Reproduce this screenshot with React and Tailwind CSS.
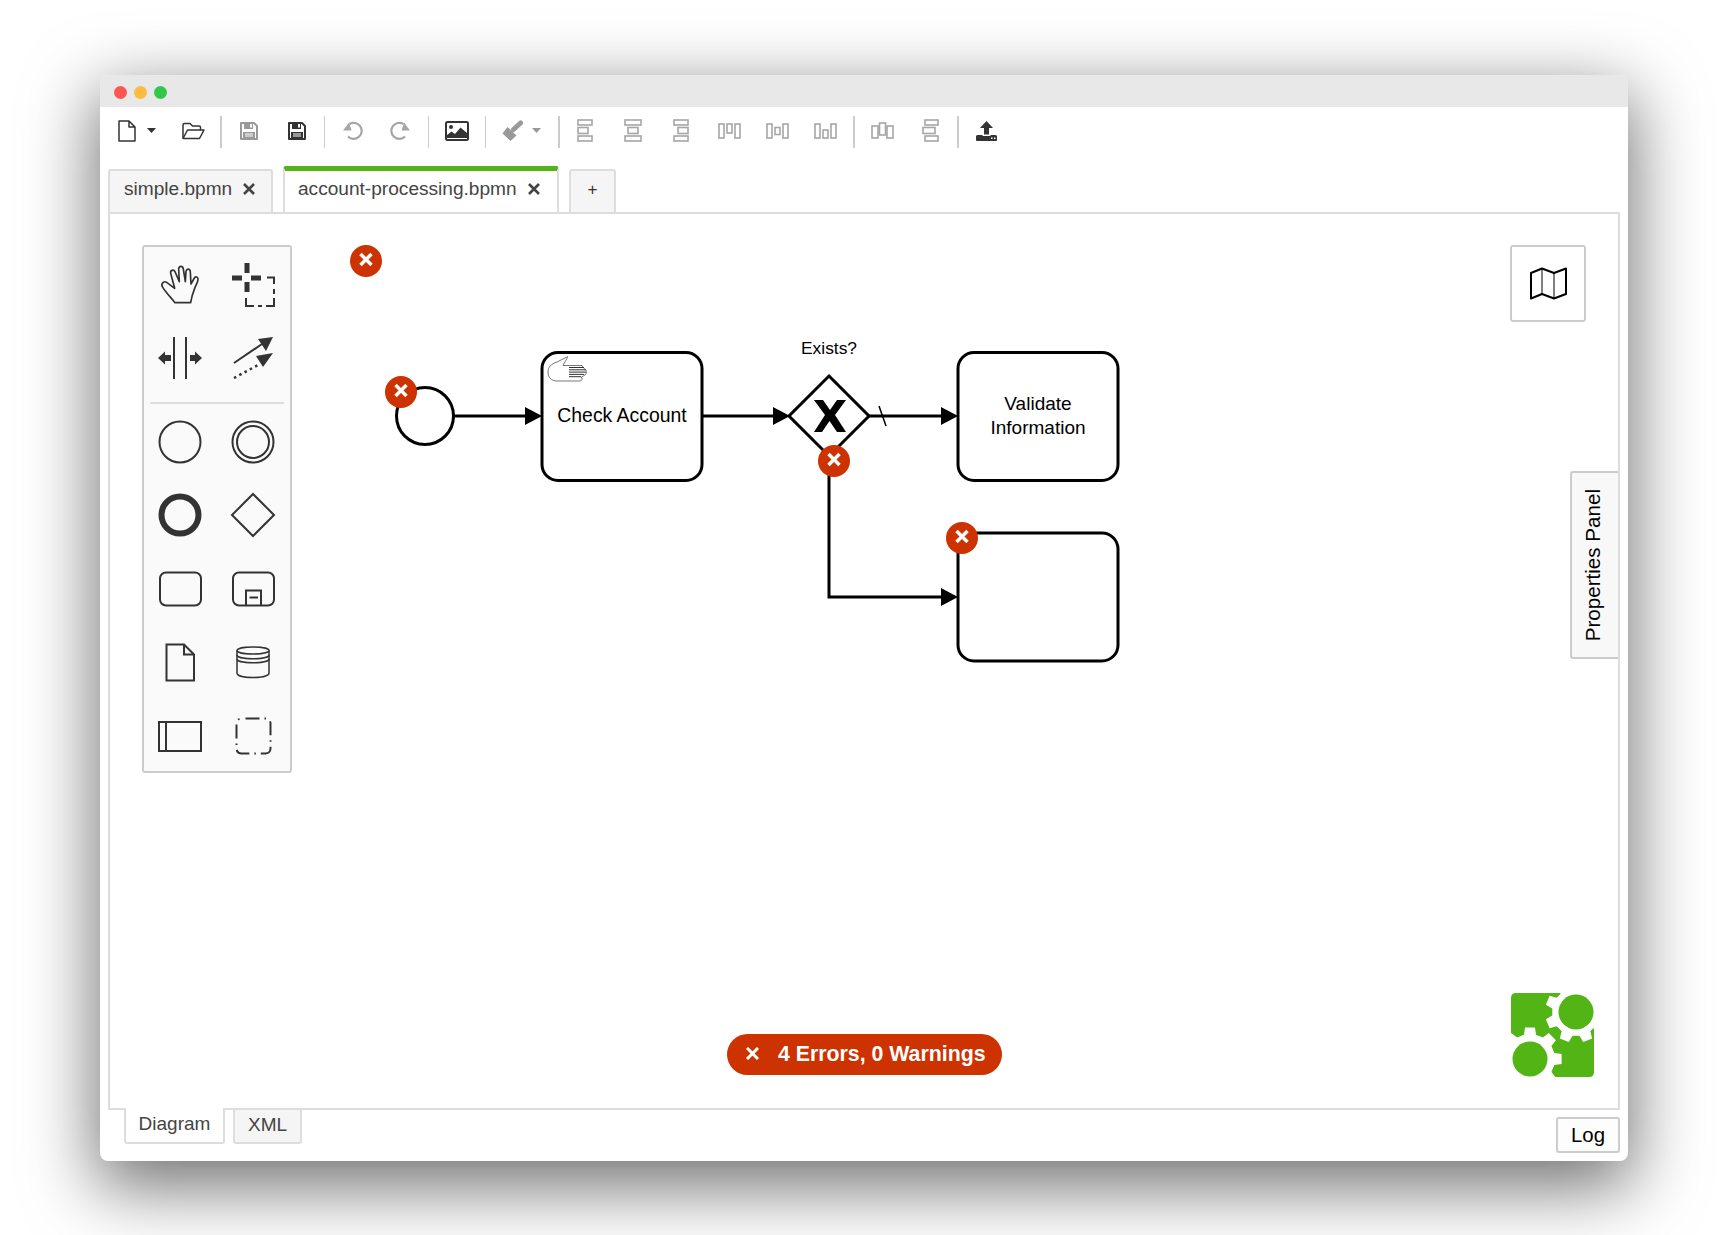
import React from 'react';

const gear = (cx, cy, tip, root, offset) => {
  const pts = [];
  for (let k = 0; k < 8; k++) {
    const a = offset + k * 45;
    [[-14, root], [-9, tip], [9, tip], [14, root]].forEach(([d, r]) => {
      const t = ((a + d) * Math.PI) / 180;
      pts.push(`${(cx + r * Math.cos(t)).toFixed(1)},${(cy + r * Math.sin(t)).toFixed(1)}`);
    });
  }
  return pts.join(' ');
};

const Sep = ({ className = '' }) => <div className={`w-[2px] h-[32px] bg-[#ccc] shrink-0 ${className}`} />;

const Caret = ({ color }) => (
  <svg viewBox="0 0 9 5" className="w-[9px] h-[5px]">
    <polygon points="0,0 9,0 4.5,5" fill={color} />
  </svg>
);

const SaveIcon = ({ color }) => (
  <svg viewBox="0 0 18 18" className="w-[18px] h-[18px]">
    <path d="M1 1H14L17 4V17H1Z" fill="#fff" stroke={color} strokeWidth="2" strokeLinejoin="round" />
    <path d="M4 1H13V7H4Z" fill={color} />
    <rect x="10" y="2" width="2" height="3.500" fill="#fff" />
    <path d="M3 10H15V17H3Z" fill={color} />
    <path d="M5 12H13M5 14H13" stroke="#fff" strokeWidth="1" />
  </svg>
);

const UndoIcon = ({ className = '' }) => (
  <svg viewBox="0 0 20 19" className={`w-[20px] h-[19px] ${className}`}>
    <path d="M6.500 3A8 8 0 1 1 5 15.500" fill="none" stroke="#a6a6a6" strokeWidth="2.200" />
    <polygon points="0,9.500 8.500,9.500 6,1.500" fill="#a6a6a6" />
  </svg>
);

const Aligned = ({ w, h, rects }) => (
  <svg viewBox={`-1 -1 ${w + 2} ${h + 2}`} style={{ width: w + 2, height: h + 2 }}>
    {rects.map((r, i) => (
      <rect key={i} x={r[0]} y={r[1]} width={r[2]} height={r[3]} fill="none" stroke="#a6a6a6" strokeWidth="1.600" />
    ))}
  </svg>
);

const Btn = ({ className = 'w-[48px]', children }) => (
  <div className={`flex items-center justify-center shrink-0 h-full pb-[3px] ${className}`}>{children}</div>
);

const Toolbar = () => (
  <div className="flex items-center h-[50px] shrink-0">
    <div className="flex items-center w-[70px] h-full pl-[18px] pb-[3px] shrink-0">
      <svg viewBox="0 0 18 22" className="w-[18px] h-[22px]">
        <path d="M1 1H11L17 7V21H1Z M11 1V7H17" fill="none" stroke="#333" strokeWidth="1.500" strokeLinejoin="round" />
      </svg>
      <div className="ml-[11px] flex">
        <Caret color="#333" />
      </div>
    </div>
    <Btn className="w-[47px]">
      <svg viewBox="0 0 23 18" className="w-[23px] h-[18px]">
        <path d="M1 16V3Q1 1.500 2.500 1.500H8L10.500 4H17Q18.500 4 18.500 5.500V8" fill="none" stroke="#333" strokeWidth="1.500" />
        <path d="M1 16.500L5.500 8H22L17.500 16.500Z" fill="none" stroke="#333" strokeWidth="1.500" strokeLinejoin="round" />
      </svg>
    </Btn>
    <Sep className="ml-[3px]" />
    <Btn className="w-[54px]"><SaveIcon color="#999" /></Btn>
    <Btn className="w-[42px]"><SaveIcon color="#333" /></Btn>
    <Sep className="ml-[6px] !w-[1px]" />
    <Btn className="w-[56px]"><UndoIcon /></Btn>
    <Btn className="w-[38px]"><UndoIcon className="-scale-x-100" /></Btn>
    <Sep className="ml-[9px] !w-[1px]" />
    <Btn className="w-[56px]">
      <svg viewBox="0 0 24 20" className="w-[24px] h-[20px]">
        <rect x="1" y="1" width="22" height="18" rx="1.500" fill="#fff" stroke="#333" strokeWidth="2" />
        <circle cx="6" cy="6" r="2" fill="#333" />
        <polygon points="2,17 2,14 6.500,10.500 10,13 15.500,6.500 22,12 22,17" fill="#333" />
      </svg>
    </Btn>
    <Sep className="!w-[1px]" />
    <div className="flex items-center w-[72px] h-full pl-[16px] pb-[3px] shrink-0">
      <svg viewBox="0 0 20 21" className="w-[21px] h-[21px]">
        <path d="M18 3L11 9.500" stroke="#999" strokeWidth="5" strokeLinecap="round" />
        <polygon points="5,7 14,15.500 8,21 0,13.500" fill="#999" />
      </svg>
      <div className="ml-[9px] flex">
        <Caret color="#999" />
      </div>
    </div>
    <Sep />
    <Btn className="w-[48px] ml-[1px]"><Aligned w={14} h={21} rects={[[0, 0, 14, 5], [0, 7.500, 10, 6], [0, 16, 14, 5]]} /></Btn>
    <Btn><Aligned w={16} h={21} rects={[[0, 0, 16, 5], [3, 7.500, 10, 6], [0, 16, 16, 5]]} /></Btn>
    <Btn><Aligned w={14} h={21} rects={[[0, 0, 14, 5], [4, 7.500, 10, 6], [0, 16, 14, 5]]} /></Btn>
    <Btn><Aligned w={21} h={14} rects={[[0, 0, 5, 14], [8, 0, 5, 9], [16, 0, 5, 14]]} /></Btn>
    <Btn><Aligned w={21} h={14} rects={[[0, 0, 5, 14], [8, 3.500, 5, 7], [16, 0, 5, 14]]} /></Btn>
    <Btn><Aligned w={21} h={14} rects={[[0, 0, 5, 14], [8, 6, 5, 8], [16, 0, 5, 14]]} /></Btn>
    <Sep className="ml-[4px]" />
    <Btn className="w-[48px] ml-[3px]"><Aligned w={21} h={15} rects={[[0, 3, 6, 12], [7.500, 0, 6, 12], [15, 3, 6, 12]]} /></Btn>
    <Btn><Aligned w={15} h={21} rects={[[2, 0, 13, 5], [0, 7.500, 12, 6], [2, 16, 13, 5]]} /></Btn>
    <Sep className="ml-[3px]" />
    <Btn className="w-[55px]">
      <svg viewBox="0 0 21 20" className="w-[21px] h-[20px]">
        <polygon points="10.500,0 17,7 13,7 13,13.500 8,13.500 8,7 4,7" fill="#333" />
        <path d="M0 19V15.500Q0 14 1.500 14H6.500V15H14.500V14H19.500Q21 14 21 15.500V19Q21 20 20 20H1Q0 20 0 19Z" fill="#333" />
        <rect x="15" y="16.500" width="1.500" height="1.500" fill="#fff" />
        <rect x="18" y="16.500" width="1.500" height="1.500" fill="#fff" />
      </svg>
    </Btn>
  </div>
);

const CloseX = () => (
  <svg viewBox="0 0 12 12" className="w-[12px] h-[12px]">
    <path d="M1 1L11 11M11 1L1 11" stroke="#444" strokeWidth="2.600" />
  </svg>
);

const TabStrip = () => (
  <div className="flex items-end h-[47px] pl-[8px] shrink-0">
    <div className="flex items-center w-[165px] h-[44px] pl-[14px] pb-[6px] bg-[#f5f5f5] border-2 border-b-0 border-[#ddd] rounded-t-[3px]">
      <span className="text-[19.1px] text-[#444] leading-none">simple.bpmn</span>
      <span className="ml-[11px] flex"><CloseX /></span>
    </div>
    <div className="flex items-center ml-[10px] w-[276px] h-[47px] pl-[13px] pb-[6px] bg-white border-2 border-t-[5px] border-b-0 border-[#ddd] border-t-[#52b415] rounded-t-[3px]">
      <span className="text-[19.1px] text-[#444] leading-none">account-processing.bpmn</span>
      <span className="ml-[11px] flex"><CloseX /></span>
    </div>
    <div className="flex items-center justify-center ml-[10px] w-[47px] h-[44px] pb-[6px] bg-[#f5f5f5] border-2 border-b-0 border-[#ddd] rounded-t-[3px] text-[17px] text-[#333] leading-none">
      +
    </div>
  </div>
);

const PaletteIcon = ({ box, children }) => (
  <div className="flex items-center justify-center h-[73px]">
    <svg viewBox={box} className="w-[48px] h-[48px] overflow-visible" fill="none" stroke="#333" strokeWidth="2">
      {children}
    </svg>
  </div>
);

const Palette = () => (
  <div className="absolute left-[32px] top-[31px] w-[150px] h-[528px] pt-[1px] bg-[#fafafa] border-2 border-[#ccc] rounded-[3px]">
    <div className="grid grid-cols-[72px_74px]">
      <PaletteIcon box="156 261 48 48">
        <g transform="translate(130 230) scale(0.3333)">
          <path
            d="M135 218L182 218C184 205 188 190 194 175C198 165 205 155 204 146C203 140 197 139 193 144L183 162L181 125C180 115 170 115 168 124L166 155L160 117C158 106 147 107 146 117L148 155L135 125C131 117 120 121 122 130L134 175L110 157C103 152 92 160 97 170C105 185 125 205 135 218Z"
            strokeWidth="5"
            strokeLinejoin="round"
          />
        </g>
      </PaletteIcon>
      <PaletteIcon box="229 261 48 48">
        <path d="M247 263V273M247 282V292M232 278H242M251 278H261" strokeWidth="5" stroke="#333" />
        <path d="M267 277.500H274V284M274 289V294M274 298V306H266M262 306H258M254 306H246V298" strokeWidth="2" />
      </PaletteIcon>
      <PaletteIcon box="156 334 48 48">
        <path d="M174 337V379M186 337V379" strokeWidth="2" />
        <path d="M158 358L165 351.500V355H171V361H165V364.500Z" fill="#333" stroke="none" />
        <path d="M202 358L195 351.500V355H190V361H195V364.500Z" fill="#333" stroke="none" />
      </PaletteIcon>
      <PaletteIcon box="229 334 48 48">
        <path d="M234 363L262 344" strokeWidth="2" />
        <polygon points="273,337 266,351 258,339" fill="#333" stroke="none" />
        <path d="M234 378L258 365" strokeWidth="2.500" strokeDasharray="2.500 3.500" />
        <polygon points="273,353 263,367 256,356" fill="#333" stroke="none" />
      </PaletteIcon>
    </div>
    <div className="mx-[6px] mt-[8px] mb-[2px] h-[2px] bg-[#ddd]" />
    <div className="grid grid-cols-[72px_74px]">
      <PaletteIcon box="156 419 48 48">
        <circle cx="180" cy="442" r="20.500" />
      </PaletteIcon>
      <PaletteIcon box="229 419 48 48">
        <circle cx="253" cy="442" r="20.500" />
        <circle cx="253" cy="442" r="16" />
      </PaletteIcon>
      <PaletteIcon box="156 492 48 48">
        <circle cx="180" cy="515" r="18.500" strokeWidth="6" />
      </PaletteIcon>
      <PaletteIcon box="229 492 48 48">
        <polygon points="253,494 274,515 253,536 232,515" />
      </PaletteIcon>
      <PaletteIcon box="156 565 48 48">
        <rect x="160" y="572.500" width="41" height="33" rx="6" />
      </PaletteIcon>
      <PaletteIcon box="229 565 48 48">
        <rect x="233" y="572.500" width="41" height="33" rx="6" />
        <path d="M246 605.500V590.500H261V605.500" />
        <path d="M249.500 597.500H258" />
      </PaletteIcon>
      <PaletteIcon box="156 638 48 48">
        <path d="M166.500 644.500H184L194 654.500V680.500H166.500Z" strokeLinejoin="miter" />
        <path d="M184 644.500V654.500H194" />
      </PaletteIcon>
      <PaletteIcon box="229 638 48 48">
        <ellipse cx="253" cy="650.500" rx="16" ry="3.500" strokeWidth="1.500" />
        <path d="M237 650.500V673C237 679 269 679 269 673V650.500" strokeWidth="1.500" />
        <path d="M237 655C237 660 269 660 269 655M237 659C237 664 269 664 269 659" strokeWidth="1.500" />
      </PaletteIcon>
      <PaletteIcon box="156 711 48 48">
        <rect x="159" y="722" width="42" height="29" />
        <path d="M166 722V751" />
      </PaletteIcon>
      <PaletteIcon box="229 711 48 48">
        <rect x="236.500" y="718.500" width="34" height="35" rx="5" strokeDasharray="14 5 1.500 5" strokeDashoffset="-4" />
      </PaletteIcon>
    </div>
  </div>
);

const ErrorDot = ({ x, y }) => (
  <g>
    <circle cx={x} cy={y} r="16" fill="#cc3300" />
    <path d={`M${x - 5.5} ${y - 7}L${x + 5.5} ${y + 4}M${x + 5.5} ${y - 7}L${x - 5.5} ${y + 4}`} stroke="#fff" strokeWidth="3.500" />
  </g>
);

const Task = ({ y }) => <rect x="0" y={y} width="160" height="128" rx="16" fill="#fff" stroke="#000" strokeWidth="3" />;

const Diagram = () => (
  <svg viewBox="110 214 1508 894" className="absolute inset-0 w-full h-full">
    <circle cx="425" cy="416" r="28.500" fill="#fff" stroke="#000" strokeWidth="3" />
    <path d="M454 416H527" stroke="#000" strokeWidth="3" />
    <polygon points="525,407 542,416 525,425" fill="#000" />

    <g transform="translate(542 0)"><Task y={352.5} /></g>
    <path
      d="M567 357L557 362C551 364 548 367 548 372C548 378 552 381 557 381L580 381C582 381 583 378 581 377.500L585 375C587 373 587 371 585 369.500L582 365.500H563L566 360C568 357 568 356 567 357Z"
      fill="none"
      stroke="#555"
      strokeWidth="0.800"
    />
    <path d="M569 367.500H584M569 369.800H586M569 372.100H586M569 374.400H584M569 376.700H581" stroke="#333" strokeWidth="1" />
    <text x="622" y="422" textAnchor="middle" fill="#000" className="text-[19.4px]">Check Account</text>

    <path d="M703 416H775" stroke="#000" strokeWidth="3" />
    <polygon points="773,407 790,416 773,425" fill="#000" />
    <polygon points="829,376 869,416 829,456 789,416" fill="#fff" stroke="#000" strokeWidth="3" strokeLinejoin="miter" />
    <polygon
      points="814,400 823,400 830,410 837,400 846,400 835,415 846,432 837,432 829.500,421 822,432 814,432 825,415"
      fill="#000"
    />
    <text x="829" y="354" textAnchor="middle" fill="#000" className="text-[17.4px]">Exists?</text>

    <path d="M869 416H943" stroke="#000" strokeWidth="3" />
    <path d="M879 406L886 426" stroke="#000" strokeWidth="1.500" />
    <polygon points="941,407 958,416 941,425" fill="#000" />
    <g transform="translate(958 0)"><Task y={352.5} /></g>
    <text x="1038" y="410" textAnchor="middle" fill="#000" className="text-[19px]">Validate</text>
    <text x="1038" y="434" textAnchor="middle" fill="#000" className="text-[19px]">Information</text>

    <path d="M829 456V597H943" fill="none" stroke="#000" strokeWidth="3" />
    <polygon points="941,588 958,597 941,606" fill="#000" />
    <g transform="translate(958 0)"><Task y={533} /></g>

    <ErrorDot x={366} y={261} />
    <ErrorDot x={401} y={392} />
    <ErrorDot x={834} y={461} />
    <ErrorDot x={962} y={538} />
  </svg>
);

const Logo = () => (
  <svg viewBox="1511 993 84 85" className="absolute right-[23px] bottom-[30px] w-[84px] h-[85px]">
    <path d="M1516 993H1560L1594 1029V1072Q1594 1077 1589 1077H1553L1511 1034V998Q1511 993 1516 993Z" fill="#52b415" />
    <polygon points={gear(1576, 1012, 31, 24, 22.5)} fill="#fff" />
    <polygon points={gear(1530, 1059, 32, 25, 0)} fill="#fff" />
    <circle cx="1576" cy="1012" r="17.500" fill="#52b415" />
    <circle cx="1530" cy="1059" r="17.500" fill="#52b415" />
  </svg>
);

export default function App() {
  return (
    <div className="w-[1728px] h-[1235px] pt-[75px] pl-[100px] bg-white overflow-hidden font-['Liberation_Sans',sans-serif]">
      <div className="flex flex-col w-[1528px] h-[1086px] bg-white rounded-[8px] shadow-[0_22px_70px_4px_rgba(0,0,0,0.56)]">
        <div className="flex items-center gap-[7px] h-[32px] pl-[14px] pt-[2px] bg-[#e8e8e8] rounded-t-[8px] shrink-0">
          <div className="w-[13px] h-[13px] rounded-full bg-[#fc5753]" />
          <div className="w-[13px] h-[13px] rounded-full bg-[#fdbc40]" />
          <div className="w-[13px] h-[13px] rounded-full bg-[#33c748]" />
        </div>
        <Toolbar />
        <div className="h-[9px] shrink-0" />
        <TabStrip />

        <div className="relative ml-[8px] w-[1512px] h-[898px] -mt-[1px] border-2 border-[#ddd] shrink-0">
          <Diagram />
          <Palette />
          <div className="absolute right-[32px] top-[31px] flex items-center justify-center w-[76px] h-[77px] bg-white border-2 border-[#ccc] rounded-[3px]">
            <svg viewBox="1530 266 37 33" className="w-[37px] h-[33px]">
              <path d="M1531 272L1542 267.500L1554 272L1566 267.500V293L1554 297.500L1542 293L1531 297.500Z" fill="none" stroke="#000" strokeWidth="2" strokeLinejoin="round" />
              <path d="M1542 267.500V293M1554 272V297.500" stroke="#000" strokeWidth="1" />
            </svg>
          </div>
          <div className="absolute right-0 top-[257px] flex items-center justify-center w-[48px] h-[188px] pr-[3px] bg-[#f8f8f8] border-2 border-r-0 border-[#ccc] rounded-l-[3px]">
            <span className="[writing-mode:vertical-rl] rotate-180 text-[20.6px] text-black leading-none whitespace-nowrap">
              Properties Panel
            </span>
          </div>
          <Logo />
          <div className="absolute left-[617px] bottom-[33px] flex items-center w-[275px] h-[41px] pl-[19px] bg-[#cc3300] rounded-[21px] text-white">
            <svg viewBox="0 0 13 13" className="w-[13px] h-[13px] -mt-[2px]">
              <path d="M1 1L12 12M12 1L1 12" stroke="#fff" strokeWidth="3" />
            </svg>
            <span className="ml-[19px] text-[21.3px] font-bold leading-none whitespace-nowrap">4 Errors, 0 Warnings</span>
          </div>
        </div>

        <div className="relative flex items-start grow ml-[24px] mr-[8px]">
          <div className="flex items-center justify-center w-[101px] h-[36px] pb-[3px] -mt-[2px] bg-white border-2 border-t-0 border-[#ddd] rounded-b-[3px] text-[19px] text-[#444] leading-none">
            Diagram
          </div>
          <div className="flex items-center justify-center ml-[8px] w-[69px] h-[34px] pb-[4px] bg-[#f5f5f5] border-2 border-t-0 border-[#ddd] rounded-b-[3px] text-[19px] text-[#444] leading-none">
            XML
          </div>
          <div className="ml-auto mt-[7px] flex items-center justify-center w-[64px] h-[36px] bg-[#fdfdfd] border-2 border-[#ccc] rounded-[3px] text-[20.4px] text-black leading-none">
            Log
          </div>
        </div>
      </div>
    </div>
  );
}
